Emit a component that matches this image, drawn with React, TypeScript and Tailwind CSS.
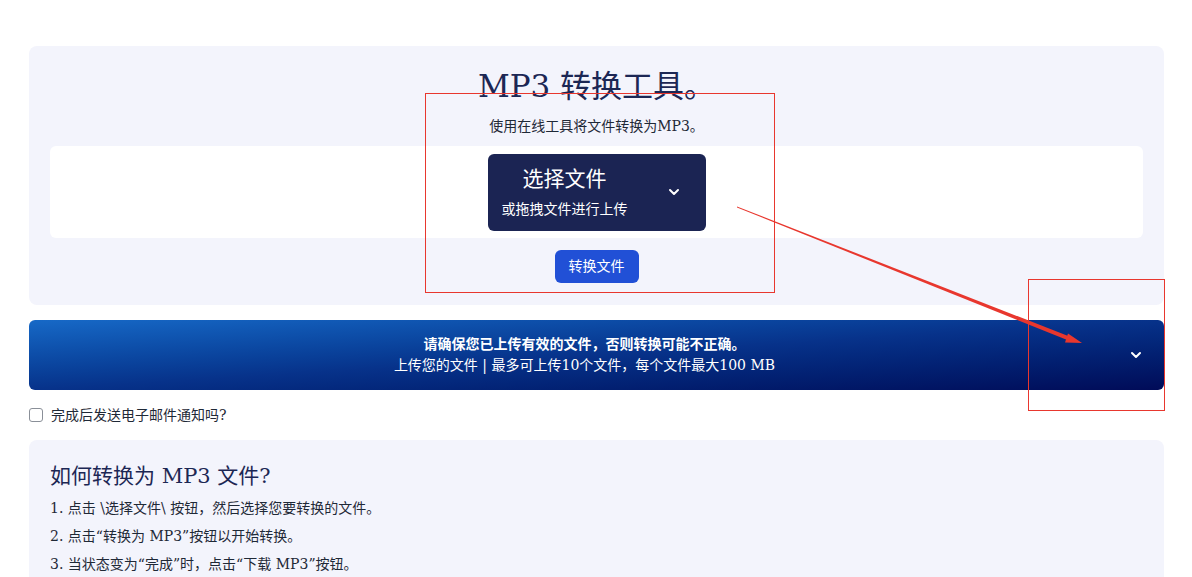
import { ChevronDown } from "lucide-react";

const FONT = { fontFamily: '"DejaVu Serif", "Noto Sans CJK SC", serif' };

const STEPS = [
  "1. 点击 \\选择文件\\ 按钮，然后选择您要转换的文件。",
  "2. 点击“转换为 MP3”按钮以开始转换。",
  "3. 当状态变为“完成”时，点击“下载 MP3”按钮。",
];

function UploadCard() {
  return (
    <section className="flex flex-col items-center rounded-lg bg-[#f3f4fc] px-[21px] pb-[22px] pt-[19px]">
      <h1 className="text-[31px] leading-[42px] text-[#1c2754]">MP3 转换工具。</h1>
      <p className="mt-[9px] text-[14px] leading-[20px] text-[#1f2937]">使用在线工具将文件转换为MP3。</p>
      <div className="mt-[10px] flex h-[92px] w-full items-center justify-center rounded-md bg-white">
        <button className="flex h-[77px] w-[218px] items-center justify-between rounded-md bg-[#1b2453] pl-[14px] pr-[24px] text-white">
          <span className="flex flex-col items-center">
            <span className="text-[21px] leading-[28px]">选择文件</span>
            <span className="mt-[6px] text-[14px] leading-[20px]">或拖拽文件进行上传</span>
          </span>
          <ChevronDown size={16} strokeWidth={3} />
        </button>
      </div>
      <button className="mt-[12px] h-[33px] rounded-md bg-[#2150d6] px-[14px] text-[14px] text-white">转换文件</button>
    </section>
  );
}

function NoticeBanner() {
  return (
    <div className="mt-[15px] flex h-[70px] items-center rounded-md bg-linear-to-br from-[#1769c7] via-[#07328a] to-[#010b58] px-5 text-white">
      <div className="flex flex-1 flex-col items-center text-[14px] leading-[21px]">
        <span className="font-bold">请确保您已上传有效的文件，否则转换可能不正确。</span>
        <span>上传您的文件 | 最多可上传10个文件，每个文件最大100 MB</span>
      </div>
      <ChevronDown size={16} strokeWidth={3} className="ml-2" />
    </div>
  );
}

function HowTo() {
  return (
    <section className="mt-[13px] rounded-lg bg-[#f3f4fc] px-[21px] pb-6 pt-[22px] text-[#1f2937]">
      <h2 className="mb-1 text-[21px] leading-[28px] text-[#1c2754]">如何转换为 MP3 文件?</h2>
      {STEPS.map((s) => (
        <p key={s} className="text-[14px] leading-[28px]">
          {s}
        </p>
      ))}
    </section>
  );
}

export default function App() {
  return (
    <div className="relative h-[577px] w-full overflow-hidden bg-white pl-[29px] pr-[28px] pt-[46px]" style={FONT}>
      <UploadCard />
      <NoticeBanner />
      <label className="mt-[13px] flex items-center gap-2 text-[14px] leading-[24px] text-[#1f2937]">
        <span className="h-[14px] w-[14px] rounded-[3px] border border-[#8a8f98] bg-white" />
        完成后发送电子邮件通知吗?
      </label>
      <HowTo />

      {/* screenshot annotations */}
      <div className="pointer-events-none absolute left-[425px] top-[93px] h-[200px] w-[350px] border-[1.5px] border-[#e8372e]" />
      <div className="pointer-events-none absolute left-[1028px] top-[279px] h-[132px] w-[137px] border-[1.5px] border-[#e8372e]" />
      <svg className="pointer-events-none absolute left-0 top-0" width="1192" height="577">
        <polygon points="737,206.5 1072,337.5 1071,341.5 737,207.5" fill="#e8372e" />
        <polygon points="1082,343 1068,333.5 1065,342.5" fill="#e8372e" />
      </svg>
    </div>
  );
}
